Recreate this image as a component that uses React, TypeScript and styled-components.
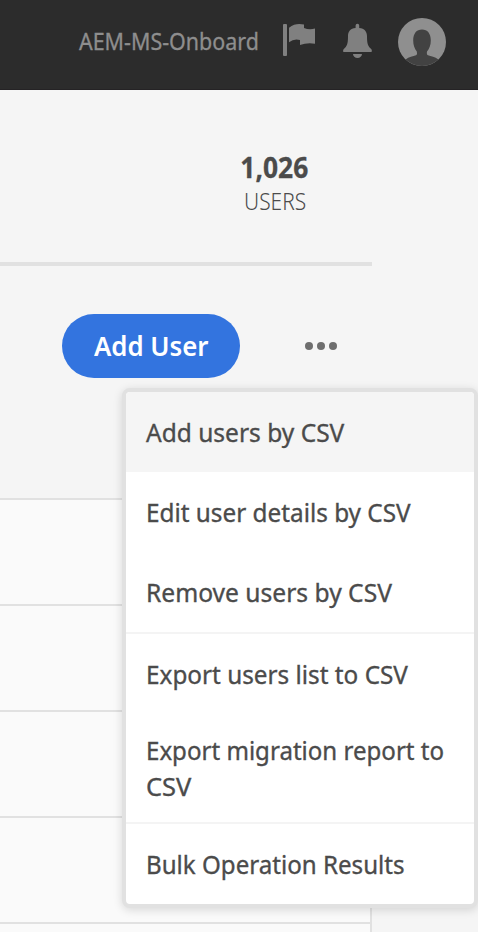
import React from "react";
import styled, { createGlobalStyle } from "styled-components";

const GlobalStyle = createGlobalStyle`
  *, *::before, *::after { box-sizing: border-box; }
  body {
    margin: 0;
    background: #f5f5f5;
    font-family: "Noto Sans", "Open Sans", sans-serif;
    color: #4b4b4b;
    overflow: hidden;
  }
`;

const Page = styled.div`
  width: 478px;
  height: 932px;
  overflow: hidden;
  background: #f5f5f5;
`;

/* Condenses the face horizontally, anchored on the given side. */
const Condensed = styled.span<{ $scale: number; $origin?: string }>`
  display: inline-block;
  white-space: pre;
  transform: scaleX(${(p) => p.$scale});
  transform-origin: ${(p) => p.$origin ?? "left"} center;
`;

const TopBar = styled.header`
  display: flex;
  align-items: center;
  justify-content: flex-end;
  height: 90px;
  padding: 0 32px 5px 0;
  background: #2c2c2c;
  border-bottom: 1px solid #252325;
`;

const OrgName = styled.div`
  margin: 0 23px 2px 0;
  font-size: 23px;
  line-height: 32px;
  -webkit-text-stroke: 0.3px #8e8e8e;
  color: #8e8e8e;
`;

const FlagIcon = styled.svg`
  display: block;
  width: 34px;
  height: 34px;
  margin: 0 26px 4px 0;
`;

const BellIcon = styled.svg`
  display: block;
  width: 32px;
  height: 36px;
  margin: 0 24px 2px 0;
`;

const AvatarIcon = styled.svg`
  display: block;
  width: 48px;
  height: 48px;
`;

const Content = styled.main`
  width: 372px;
`;

const Summary = styled.section`
  display: flex;
  justify-content: flex-end;
  height: 176px;
  padding: 57px 48px 0 0;
  border-bottom: 4px solid #e1e1e1;
`;

const Stat = styled.div`
  width: 100px;
  text-align: center;
`;

const StatValue = styled.div`
  font-size: 29px;
  line-height: 40px;
  font-weight: 700;
  -webkit-text-stroke: 0.3px #4b4b4b;
`;

const StatLabel = styled.div`
  padding-left: 2px;
  font-size: 23px;
  line-height: 28px;
  font-weight: 300;
`;

const Toolbar = styled.section`
  display: flex;
  align-items: center;
  height: 64px;
  margin: 48px 0 120px 62px;
`;

const AddButton = styled.button`
  display: flex;
  align-items: center;
  width: 178px;
  height: 64px;
  padding: 0 0 0 32px;
  border: 0;
  border-radius: 32px;
  background: #3374df;
  color: #fff;
  font: 600 27px/36px "Noto Sans", "Open Sans", sans-serif;
`;

const MoreAnchor = styled.div`
  position: relative;
  display: flex;
  align-items: center;
  height: 64px;
  margin-left: 65px;
`;

const MoreButton = styled.button`
  display: flex;
  gap: 4px;
  padding: 0;
  border: 0;
  background: none;
`;

const Dot = styled.span`
  width: 8px;
  height: 8px;
  border-radius: 50%;
  background: #6e6e6e;
`;

const Menu = styled.div`
  position: absolute;
  z-index: 2;
  top: 74px;
  right: -141px;
  width: 356px;
  border: 4px solid #e1e1e1;
  border-radius: 8px;
  background: #fff;
  box-shadow: 0 2px 10px rgba(0, 0, 0, 0.14);
`;

const MenuGroup = styled.div`
  & + & {
    border-top: 2px solid #f4f4f4;
  }
`;

const MenuItem = styled.div<{ $active?: boolean; $tall?: boolean }>`
  display: flex;
  flex-direction: column;
  align-items: flex-start;
  justify-content: center;
  height: ${(p) => (p.$tall ? 108 : 80)}px;
  padding-left: 20px;
  border-radius: ${(p) => (p.$active ? "4px 4px 0 0" : "0")};
  background: ${(p) => (p.$active ? "#f5f5f5" : "transparent")};
  font-size: 26px;
  line-height: 36px;
  -webkit-text-stroke: 0.35px #4b4b4b;
`;

const Table = styled.section`
  border-right: 2px solid #e1e1e1;
  background: #fafafa;
`;

const TableRow = styled.div`
  height: 106px;
  border-top: 2px solid #e1e1e1;
`;

type Line = { text: string; scale: number };
type Item = { lines: Line[]; active?: boolean };

const groups: Item[][] = [
  [
    { lines: [{ text: "Add users by CSV", scale: 0.943 }], active: true },
    { lines: [{ text: "Edit user details by CSV", scale: 0.935 }] },
    { lines: [{ text: "Remove users by CSV", scale: 0.946 }] },
  ],
  [
    { lines: [{ text: "Export users list to CSV", scale: 0.935 }] },
    {
      lines: [
        { text: "Export migration report to", scale: 0.926 },
        { text: "CSV", scale: 0.98 },
      ],
    },
  ],
  [{ lines: [{ text: "Bulk Operation Results", scale: 0.928 }] }],
];

export default function App() {
  return (
    <>
      <GlobalStyle />
      <Page>
        <TopBar>
          <OrgName>
            <Condensed $scale={0.933} $origin="right">AEM-MS-Onboard</Condensed>
          </OrgName>
          <FlagIcon viewBox="282 23 34 34" fill="#808080">
            <rect x="283" y="24" width="4" height="32" rx="1" />
            <path d="M289 27.8C294 23.8 299 23.4 304 24.6V28Q309 30 315 28.6V43.7Q307 42.4 300 45V40Q294 38.2 289 42.3Z" />
          </FlagIcon>
          <BellIcon viewBox="342 23 32 36" fill="#808080">
            <path d="M355.6 28V25.6a1.8 1.8 0 0 1 3.6 0V28C364.500 28.600 367 31.500 367 36C367 44.500 368 46 371.200 49C372 50 372 51 371.500 52H343.400C343 51 343 50 343.800 49C347 46 348 44.500 348 36C348 31.500 350.300 28.600 355.600 28Z" />
            <path d="M353 54h9a4.500 4 0 0 1-9 0Z" />
          </BellIcon>
          <AvatarIcon viewBox="398 18 48 48">
            <circle cx="422" cy="42" r="24" fill="#8f8f8f" />
            <path
              fill="#424242"
              d="M405.600 59.400C409 57 413 56.200 416 55.300C417 54.900 417.200 53.500 416.800 51.500C414.500 48.500 413.200 45 413.200 40.500C413.200 33.500 416.600 29.600 422 29.600S430.800 33.500 430.800 40.500C430.800 45 429.500 48.500 427 51.500C426.600 53.500 427 54.900 428 55.300C431 56.200 435 57 438.400 59.400A24 24 0 0 1 405.600 59.400Z"
            />
          </AvatarIcon>
        </TopBar>
        <Content>
          <Summary>
            <Stat>
              <StatValue>
                <Condensed $scale={0.91} $origin="center">1,026</Condensed>
              </StatValue>
              <StatLabel>
                <Condensed $scale={0.91} $origin="center">USERS</Condensed>
              </StatLabel>
            </Stat>
          </Summary>
          <Toolbar>
            <AddButton>
              <Condensed $scale={0.955}>Add User</Condensed>
            </AddButton>
            <MoreAnchor>
              <MoreButton aria-label="More actions">
                <Dot />
                <Dot />
                <Dot />
              </MoreButton>
              <Menu>
                {groups.map((items, i) => (
                  <MenuGroup key={i}>
                    {items.map((item) => (
                      <MenuItem
                        key={item.lines[0].text}
                        $active={item.active}
                        $tall={item.lines.length > 1}
                      >
                        {item.lines.map((line) => (
                          <Condensed key={line.text} $scale={line.scale}>
                            {line.text}
                          </Condensed>
                        ))}
                      </MenuItem>
                    ))}
                  </MenuGroup>
                ))}
              </Menu>
            </MoreAnchor>
          </Toolbar>
          <Table>
            <TableRow />
            <TableRow />
            <TableRow />
            <TableRow />
            <TableRow />
          </Table>
        </Content>
      </Page>
    </>
  );
}
